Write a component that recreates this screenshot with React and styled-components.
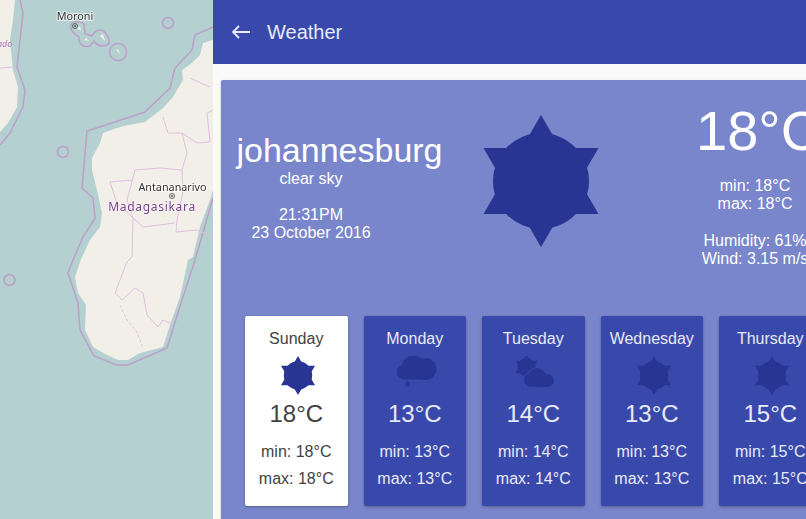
import styled, { createGlobalStyle } from 'styled-components'

const forecast = [
  { day: 'Sunday', icon: 'sun', temp: 18, min: 18, max: 18, active: true },
  { day: 'Monday', icon: 'rain', temp: 13, min: 13, max: 13 },
  { day: 'Tuesday', icon: 'partly', temp: 14, min: 14, max: 14 },
  { day: 'Wednesday', icon: 'sun', temp: 13, min: 13, max: 13 },
  { day: 'Thursday', icon: 'sun', temp: 15, min: 15, max: 15 },
]

function SunIcon({ width, height }) {
  return (
    <svg width={width} height={height} viewBox="-58 -66 116 132" fill="#283593">
      <circle cx="0" cy="0" r="48" />
      <polygon points="0,-66 57.5,33 -57.5,33" />
      <polygon points="0,66 57.5,-33 -57.5,-33" />
    </svg>
  )
}

function RainIcon() {
  return (
    <svg width="40" height="39" viewBox="0 1 40 39" fill="#283593">
      <circle cx="6.500" cy="17" r="7" />
      <circle cx="16.500" cy="12" r="11.500" />
      <circle cx="28.500" cy="14" r="11" />
      <rect x="6.500" y="14" width="22" height="10.500" />
      <path d="M10.500 25c1.200 2 2.300 3.200 2.300 4.600a2.300 2.300 0 0 1-4.600 0c0-1.400 1.100-2.600 2.300-4.600z" />
    </svg>
  )
}

function PartlyIcon() {
  return (
    <svg width="40" height="39" viewBox="0 0 40 39" fill="#283593">
      <g transform="translate(11.500 11) scale(0.19)">
        <circle cx="0" cy="0" r="48" />
        <polygon points="0,-66 57.5,33 -57.5,33" />
        <polygon points="0,66 57.5,-33 -57.5,-33" />
      </g>
      <g fill="#3949ab" stroke="#3949ab" strokeWidth="2">
        <circle cx="16" cy="24" r="7" />
        <circle cx="22" cy="21" r="9" />
      </g>
      <circle cx="16" cy="24" r="7" />
      <circle cx="22" cy="21" r="9" />
      <circle cx="32.500" cy="24.500" r="6.500" />
      <rect x="16" y="24" width="17" height="7" />
    </svg>
  )
}

function WeatherIcon({ name }) {
  if (name === 'rain') return <RainIcon />
  if (name === 'partly') return <PartlyIcon />
  return <SunIcon width={36} height={39} />
}

function CityMarker({ x, y }) {
  return (
    <g fill="none" stroke="#444">
      <circle cx={x} cy={y} r="2.500" strokeWidth="0.800" />
      <circle cx={x} cy={y} r="0.700" fill="#444" strokeWidth="0.400" />
    </g>
  )
}

function MapView() {
  return (
    <MapPane>
      <svg width="213" height="519" viewBox="0 0 213 519">
        <rect width="213" height="519" fill="#b5d0d0" />
        {/* land */}
        <path
          fill="#f2efe9"
          d="M0 0H15L13 20L10 40L13 70L18 87L17 107L8 123L0 132Z"
        />
        <path
          fill="#f2efe9"
          d="M213 40L203 43L200 55L192 63L182 70L183 80L173 97L163 108L145 122L128 125L117 128L103 133L100 143L92 158L92 170L97 190L102 213L100 227L90 240L82 257L80 262L75 277L78 293L86 305L85 330L93 347L103 353L118 360L128 360L140 353L163 347L170 325L180 297L188 260L193 257L200 227L210 200L213 190Z"
        />
        {/* maritime borders */}
        <g fill="none" stroke="#bd9fca" strokeWidth="1.500">
          <path d="M20 0L23 13L17 67L25 90L23 107L10 133L0 145" />
          <path d="M213 27L195 35L192 50L175 68L170 88L145 112L87 131L82 188L93 198L95 218L83 237L73 260L68 273L78 303L80 330L94 356L117 365L128 365L167 348L182 300L195 260L213 198" />
          <path d="M72 23C69 27 71 32 79 37C78 44 84 48 90 46L94 41C97 46 105 48 109 43C110 38 105 30 100 30C96 30 93 34 92 36L85 34L84 24C80 21 74 21 72 23Z" />
          <circle cx="118" cy="52" r="8.500" />
          <circle cx="168" cy="23" r="5.500" />
          <circle cx="63" cy="152" r="5.500" />
          <circle cx="9.500" cy="280" r="5.500" />
        </g>
        {/* inner borders */}
        <g fill="none" stroke="#e0bfe0" strokeWidth="1">
          <path d="M0 68L14 67" />
          <path d="M163 117L168 133L182 133L197 143L210 142L207 113L213 110" />
          <path d="M190 78L210 87" />
          <path d="M182 133L187 153L182 170L183 192L177 220L176 232L197 230L213 236" />
          <path d="M135 170L160 168L182 170" />
          <path d="M135 170L127 200L133 218L143 227L175 223" />
          <path d="M110 182L132 180" />
          <path d="M110 182L117 203L133 218L132 257L127 262L115 293L122 300L135 288L143 293L147 315L158 327L163 320L170 323" />
          <path d="M120 305L127 320L137 332L143 348" strokeDasharray="3 2" />
        </g>
        {/* islands */}
        <g fill="#f2efe9">
          <path d="M77 28L81 31L80 26Z" />
          <path d="M84 40L89 41L86 38Z" />
          <path d="M100 36L105 41L103 34Z" />
          <path d="M116 50L120 54L118 49Z" />
        </g>
        {/* place labels */}
        <CityMarker x={75} y={26} />
        <CityMarker x={172} y={196} />
        <MapLabel x="75" y="20" textAnchor="middle" fill="#333">Moroni</MapLabel>
        <MapLabel x="172.500" y="191" textAnchor="middle" fill="#333">Antananarivo</MapLabel>
        <RegionLabel x="152" y="211" textAnchor="middle">Madagasikara</RegionLabel>
        <PartialLabel x="-3" y="47">ado</PartialLabel>
      </svg>
    </MapPane>
  )
}

export default function App() {
  return (
    <>
      <GlobalStyle />
      <Page>
        <MapView />
        <Content>
          <Header>
            <BackIcon width="18" height="14" viewBox="0 0 18 14">
              <path d="M18 7H1.500M7 1L1 7l6 6" fill="none" stroke="#e8eaf6" strokeWidth="1.800" />
            </BackIcon>
            <Title>Weather</Title>
          </Header>
          <Panel>
            <Summary>
              <Place>
                <City>johannesburg</City>
                <PlaceInfo>
                  <Info>clear sky</Info>
                  <When>
                    <Info>21:31PM</Info>
                    <Info>23 October 2016</Info>
                  </When>
                </PlaceInfo>
              </Place>
              <BigSun>
                <SunIcon width={116} height={132} />
              </BigSun>
              <Now>
                <BigTemp>18°C</BigTemp>
                <Details>
                  <Info>min: 18°C</Info>
                  <Info>max: 18°C</Info>
                </Details>
                <Details>
                  <Info>Humidity: 61%</Info>
                  <Info>Wind: 3.15 m/s</Info>
                </Details>
              </Now>
            </Summary>
            <Days>
              {forecast.map((item) => (
                <DayCard key={item.day} $active={item.active}>
                  <DayName>{item.day}</DayName>
                  <DayIcon>
                    <WeatherIcon name={item.icon} />
                  </DayIcon>
                  <DayTemp>{item.temp}°C</DayTemp>
                  <DayRange>min: {item.min}°C</DayRange>
                  <DayRange>max: {item.max}°C</DayRange>
                </DayCard>
              ))}
            </Days>
          </Panel>
        </Content>
      </Page>
    </>
  )
}

const GlobalStyle = createGlobalStyle`
  html, body {
    margin: 0;
    height: 100%;
    overflow: hidden;
  }

  body {
    font-family: "Liberation Sans", Arial, sans-serif;
    background: #fafafa;
  }
`

const Page = styled.div`
  display: flex;
  width: 806px;
  height: 519px;
  overflow: hidden;
`

const MapPane = styled.div`
  flex: 0 0 213px;
  height: 519px;
  overflow: hidden;

  & svg {
    display: block;
    filter: blur(0.3px);
  }
`

const MapLabel = styled.text`
  font-family: "Noto Sans", sans-serif;
  font-size: 10.800px;
  paint-order: stroke;
  stroke: rgba(255, 255, 255, 0.75);
  stroke-width: 2px;
`

const RegionLabel = styled.text`
  font-family: "Noto Sans", sans-serif;
  font-size: 12px;
  letter-spacing: 0.700px;
  fill: #7b3f8c;
  paint-order: stroke;
  stroke: rgba(255, 255, 255, 0.6);
  stroke-width: 1.500px;
`

const PartialLabel = styled.text`
  font-family: "Noto Sans", sans-serif;
  font-size: 9px;
  font-style: italic;
  fill: #a778b5;
`

const Content = styled.div`
  flex: 1;
  min-width: 0;
  overflow: hidden;
  background: #fafafa;
`

const Header = styled.header`
  display: flex;
  align-items: center;
  height: 64px;
  padding-left: 19px;
  background: #3949ab;
  color: #e8eaf6;
`

const BackIcon = styled.svg`
  flex: none;
  margin-right: 17px;
`

const Title = styled.div`
  font-size: 20px;
`

const Panel = styled.section`
  width: 640px;
  height: 460px;
  margin: 16px 0 0 8px;
  border-radius: 2px;
  background: #7986cb;
  box-shadow: 0 1px 3px rgba(0, 0, 0, 0.2);
  color: #fff;
`

const Summary = styled.div`
  display: flex;
  align-items: flex-start;
  height: 236px;
  padding: 19px 0 0 15px;
  box-sizing: border-box;
  text-align: center;
`

const Place = styled.div`
  flex: 0 0 207px;
  margin-top: 31px;
`

const City = styled.div`
  font-size: 34px;
  line-height: 40px;
  white-space: nowrap;
`

const PlaceInfo = styled.div`
  width: 150px;
`

const Info = styled.div`
  font-size: 16px;
  line-height: 18px;
  white-space: nowrap;
`

const When = styled.div`
  margin-top: 18px;
`

const BigSun = styled.div`
  flex: none;
  height: 132px;
  margin: 16px 91px 0 40px;

  & svg {
    display: block;
  }
`

const Now = styled.div`
  flex: 0 0 130px;
  width: 130px;
  min-width: 0;
`

const BigTemp = styled.div`
  padding-left: 6px;
  font-size: 56px;
  line-height: 64px;
  text-align: left;
  white-space: nowrap;
`

const Details = styled.div`
  margin-top: 14px;

  & + & {
    margin-top: 19px;
  }
`

const Days = styled.div`
  display: flex;
  gap: 16px;
  padding-left: 24px;
`

const DayCard = styled.article`
  flex: 0 0 102.500px;
  height: 190px;
  padding-top: 13px;
  box-sizing: border-box;
  border-radius: 2px;
  background: ${(p) => (p.$active ? '#fff' : '#3949ab')};
  color: ${(p) => (p.$active ? '#424242' : '#e8eaf6')};
  box-shadow: 0 1px 3px rgba(0, 0, 0, 0.3);
  text-align: center;
`

const DayName = styled.div`
  font-size: 16px;
  line-height: 20px;
`

const DayIcon = styled.div`
  display: flex;
  justify-content: center;
  height: 39px;
  margin-top: 7px;
  padding-left: 4px;
`

const DayTemp = styled.div`
  margin: 5px 0 10px;
  font-size: 24px;
  line-height: 28px;
`

const DayRange = styled.div`
  font-size: 16px;
  line-height: 27px;
`
